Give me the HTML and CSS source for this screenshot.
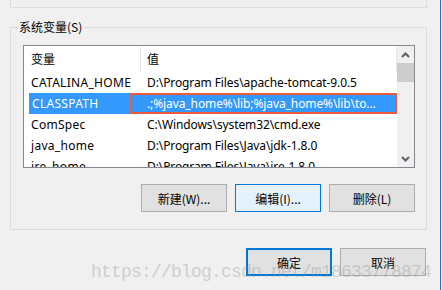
FILE: index.html
```
<!DOCTYPE html>
<html lang="zh-CN">
<head>
    <meta charset="UTF-8">
    <title>环境变量</title>
    <link rel="stylesheet" href="styles.css">
</head>
<body>
    <div class="window">
        <div class="prev-group"></div>

        <fieldset class="sys-group">
            <legend>系统变量(S)</legend>
            <div class="group-body">
                <div class="listbox">
                    <div class="list-main">
                        <div class="list-head">
                            <div class="head-cell name-head">变量</div>
                            <div class="head-cell value-head">值</div>
                        </div>
                        <div class="row">
                            <div class="cell name">CATALINA_HOME</div>
                            <div class="cell value">D:\Program Files\apache-tomcat-9.0.5</div>
                        </div>
                        <div class="row selected">
                            <div class="cell name">CLASSPATH</div>
                            <div class="cell value">.;%java_home%\lib;%java_home%\lib\to...</div>
                        </div>
                        <div class="row">
                            <div class="cell name">ComSpec</div>
                            <div class="cell value">C:\Windows\system32\cmd.exe</div>
                        </div>
                        <div class="row">
                            <div class="cell name">java_home</div>
                            <div class="cell value">D:\Program Files\Java\jdk-1.8.0</div>
                        </div>
                        <div class="row">
                            <div class="cell name">jre_home</div>
                            <div class="cell value">D:\Program Files\Java\jre-1.8.0</div>
                        </div>
                    </div>
                    <div class="scrollbar">
                        <div class="arrow">
                            <svg width="9" height="6" viewBox="0 0 9 6"><polyline points="1,5 4.5,1.5 8,5" fill="none" stroke="#606060" stroke-width="2"/></svg>
                        </div>
                        <div class="thumb"></div>
                        <div class="track"></div>
                        <div class="arrow">
                            <svg width="9" height="6" viewBox="0 0 9 6"><polyline points="1,1 4.5,4.5 8,1" fill="none" stroke="#606060" stroke-width="2"/></svg>
                        </div>
                    </div>
                </div>

                <div class="btn-row">
                    <button class="btn">新建(W)...</button>
                    <button class="btn focused">编辑(I)...</button>
                    <button class="btn">删除(L)</button>
                </div>
            </div>
        </fieldset>

        <div class="dialog-btns">
            <button class="btn default">确定</button>
            <button class="btn">取消</button>
        </div>

        <div class="watermark">https://blog.csdn.net/m18633778874</div>
    </div>
</body>
</html>
```

FILE: styles.css
```
body {
    margin: 0;
    background-color: #f0f0f0;
    font-family: 'Noto Sans', 'Noto Sans CJK SC', sans-serif;
    font-size: 12px;
    color: #000;
}
.window {
    position: relative;
    width: 440px;
    height: 290px;
    border-right: 1px solid #1b7bd4;
    overflow: hidden;
}
.prev-group {
    margin-left: 10px;
    width: 415px;
    height: 7px;
    border: 1px solid #dcdcdc;
    border-top: none;
}
.sys-group {
    margin: 11px 0 0 10px;
    padding: 0;
    width: 417px;
    box-sizing: border-box;
    border: 1px solid #dcdcdc;
    min-width: 0;
}
.sys-group legend {
    margin-left: 6px;
    padding: 0 2px;
    font-family: 'Noto Sans CJK SC', sans-serif;
    font-size: 12px;
    line-height: 16px;
    color: #000;
}
.group-body {
    padding: 10px 11px 17px 12px;
}
.listbox {
    display: flex;
    height: 123px;
    box-sizing: border-box;
    border: 1px solid #828790;
    background-color: #fff;
}
.list-main {
    flex: 1;
    overflow: hidden;
}
.list-head {
    display: grid;
    grid-template-columns: 117px 1fr;
    height: 26px;
}
.head-cell {
    display: flex;
    align-items: center;
    margin: 1px 0;
    padding-bottom: 2px;
    border-right: 1px solid #e5e5e5;
    font-family: 'Noto Sans CJK SC', sans-serif;
    font-size: 12px;
}
.name-head {
    padding-left: 7px;
}
.value-head {
    padding-left: 6px;
}
.row {
    display: grid;
    grid-template-columns: 116px 1fr;
    height: 21px;
    line-height: 21px;
    white-space: nowrap;
}
.row .name {
    padding-left: 7px;
    letter-spacing: 0.3px;
}
.row .value {
    padding-left: 7px;
    letter-spacing: -0.1px;
    overflow: hidden;
}
.row.selected {
    margin-left: 5px;
    grid-template-columns: 101px 1fr;
    background-color: #3399ff;
    color: #fff;
}
.row.selected .name {
    padding-left: 3px;
}
.row.selected .value {
    padding-left: 15px;
    border: 2px solid #ef5a3c;
    line-height: 17px;
}
.scrollbar {
    display: flex;
    flex-direction: column;
    width: 17px;
    background-color: #f0f0f0;
}
.arrow {
    display: flex;
    align-items: center;
    justify-content: center;
    height: 17px;
}
.thumb {
    height: 19px;
    background-color: #cdcdcd;
}
.track {
    flex: 1;
}
.btn-row {
    display: flex;
    justify-content: flex-end;
    gap: 8px;
    margin-top: 16px;
}
.btn {
    width: 86px;
    height: 28px;
    padding: 0;
    border: 1px solid #adadad;
    background-color: #e1e1e1;
    font-family: 'Noto Sans CJK SC', sans-serif;
    font-size: 12px;
    color: #000;
}
.btn.focused {
    border-color: #0078d7;
    background-color: #e5f1fb;
}
.btn.default {
    border: 2px solid #0078d7;
}
.dialog-btns {
    display: flex;
    justify-content: flex-end;
    gap: 8px;
    margin-top: 18px;
    padding-right: 14px;
}
.watermark {
    position: absolute;
    left: 91px;
    top: 263px;
    font-family: 'Liberation Mono', monospace;
    font-size: 18px;
    line-height: 18px;
    letter-spacing: -0.8px;
    color: rgba(150, 150, 150, 0.4);
    white-space: nowrap;
}
```
